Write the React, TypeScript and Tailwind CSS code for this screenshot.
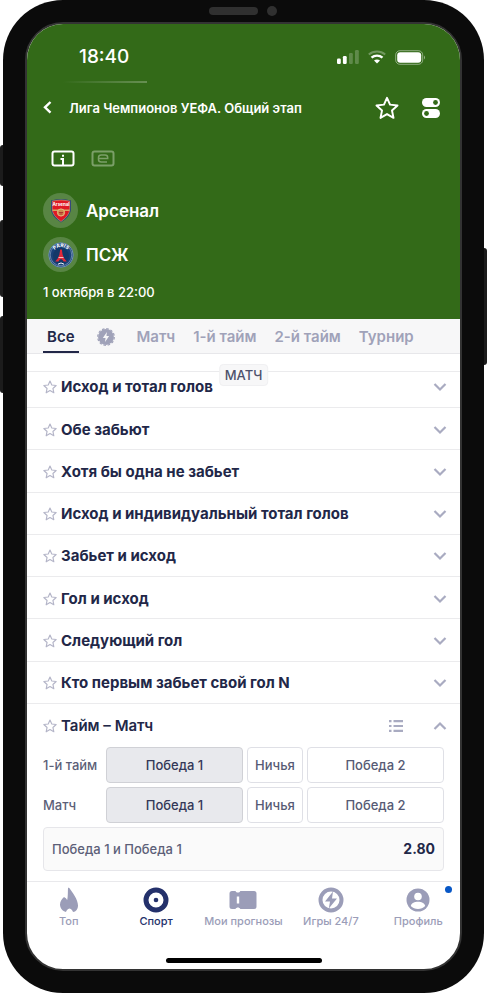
import { ReactNode } from "react";

const markets = [
  "Обе забьют",
  "Хотя бы одна не забьет",
  "Исход и индивидуальный тотал голов",
  "Забьет и исход",
  "Гол и исход",
  "Следующий гол",
  "Кто первым забьет свой гол N",
];

const tabs = ["Матч", "1-й тайм", "2-й тайм", "Турнир"];

const STAR = "M12 2.6l2.8 6.3 6.9.8-5.1 4.6 1.4 6.8-6-3.5-6 3.5 1.4-6.8-5.1-4.6 6.9-.8z";

function StarButton({ title }: { title: string }) {
  return (
    <button type="button" aria-label={`В избранное: ${title}`} className="text-[#b4b5c8]">
      <svg viewBox="1 1 22 22" className="size-[14px]" fill="none" stroke="currentColor" strokeWidth="1.8" strokeLinejoin="round">
        <path d={STAR} />
      </svg>
    </button>
  );
}

function Chevron({ up = false }: { up?: boolean }) {
  return (
    <svg viewBox="0 0 14 10" className="h-[10px] w-[14px] text-[#a9abc1]" fill="none" stroke="currentColor" strokeWidth="2.2">
      <path d={up ? "M1.5 8 7 2.5 12.5 8" : "M1.5 2 7 7.5 12.5 2"} />
    </svg>
  );
}

function MarketRow({ title }: { title: string }) {
  return (
    <div className="flex items-center gap-1 border-b border-[#ebebed] pr-[13px] pl-4">
      <StarButton title={title} />
      <button type="button" className="flex flex-1 items-center justify-between text-left text-[15px] leading-5 font-bold text-[#222748]">
        {title}
        <Chevron />
      </button>
    </div>
  );
}

function OutcomeRow({ label }: { label: string }) {
  return (
    <div role="group" aria-label={label} className="flex h-9 items-center">
      <span className="w-[63px] text-[13px] leading-4 font-medium text-[#5c5f78]">{label}</span>
      <div className="flex h-full flex-1 gap-1 text-[13px] leading-4 font-medium text-[#565a74]">
        <button type="button" aria-pressed="true" className="flex-1 rounded border border-[#d0d1d6] bg-[#e8e9ed] text-[#333858]">Победа 1</button>
        <button type="button" aria-pressed="false" className="w-14 rounded border border-[#dfe0e6] bg-white">Ничья</button>
        <button type="button" aria-pressed="false" className="flex-1 rounded border border-[#dfe0e6] bg-white">Победа 2</button>
      </div>
    </div>
  );
}

function Team({ name, children }: { name: string; children: ReactNode }) {
  return (
    <div className="flex items-center gap-2">
      <span className="flex size-[35px] items-center justify-center rounded-full bg-[#588544]">{children}</span>
      <span className="text-[17px] leading-6 font-semibold text-white">{name}</span>
    </div>
  );
}

function ArsenalCrest() {
  return (
    <svg viewBox="0 0 20 24" className="h-6 w-5">
      <path d="M0 1.5Q10-1 20 1.5V10q0 7-10 13.5Q0 17 0 10z" fill="#263d7d" />
      <path d="M1.300 2Q10 0 18.700 2v8q0 6.500-8.700 12.500Q1.300 16.500 1.300 10z" fill="#df1824" stroke="#d9b27d" strokeWidth=".5" />
      <text x="10" y="7.200" textAnchor="middle" fontSize="4.500" fontWeight="700" fill="#fff" fontFamily="Inter, sans-serif">Arsenal</text>
      <path d="M1.500 11.300h17" stroke="#d7a25f" strokeWidth="1.400" />
      <circle cx="10" cy="13.500" r="3.600" fill="#cf8a4c" stroke="#e3bd80" />
      <path d="M8 13.500h4M8.500 15h3" stroke="#a81e25" strokeWidth=".8" />
    </svg>
  );
}

function ParisCrest() {
  return (
    <svg viewBox="0 0 26 26" className="size-[26px]">
      <circle cx="13" cy="13" r="12.200" fill="#174078" stroke="#6f91b4" />
      <circle cx="13" cy="13" r="10.800" fill="none" stroke="#b7c7da" strokeWidth=".5" />
      <circle cx="13" cy="14" r="8" fill="#123868" />
      <defs><path id="paris-arc" d="M5.200 10A8.600 8.600 0 0 1 20.800 10" /></defs>
      <text fontSize="5" fontWeight="700" fill="#fff" fontFamily="Inter, sans-serif" textAnchor="middle"><textPath href="#paris-arc" startOffset="50%">PARIS</textPath></text>
      <path d="M12.200 7.500h1.600l.8 5q.8 4 4.200 7h-3.300q-.8-2.500-2.500-2.500t-2.500 2.500H7.200q3.400-3 4.200-7z" fill="#e3293a" />
      <path d="M10.500 15.500h5" stroke="#fff" strokeWidth=".7" />
      <path d="M10 22.200q3-2.500 6 0" stroke="#fff" fill="none" />
    </svg>
  );
}

function BoltBadge() {
  return (
    <svg viewBox="0 0 20 20" className="size-[18px]">
      <circle cx="10" cy="10" r="8.800" fill="currentColor" />
      <circle cx="10" cy="10" r="9.200" fill="none" stroke="currentColor" strokeWidth="1.400" strokeDasharray="2.800 2.017" />
      <path d="M11 4.500 6.500 11h3l-.6 4.500L13.500 9h-3z" fill="#f7f7f8" />
    </svg>
  );
}

const nav: { label: string; active?: boolean; dot?: boolean; icon: ReactNode }[] = [
  {
    label: "Топ",
    icon: <path d="M12 .8c.8-.4 1.300 0 1.700.6C16 5 22 12 22 18.500c0 3.500-2 6.500-5 6.500-.3-1.500-1.500-3-3.500-3.500-2 .5-3.200 2-3.500 3.500-3.500-.8-6-3.800-6-7.500 0-3 2-6 4-7.500 1.500.8 2.500 1.800 3.200 3C12 10 11.800 4 12 .8z" fill="currentColor" />,
  },
  {
    label: "Спорт",
    active: true,
    icon: <><circle cx="13" cy="13" r="10" fill="none" stroke="currentColor" strokeWidth="5" /><circle cx="13" cy="13" r="2.300" fill="currentColor" /></>,
  },
  {
    label: "Мои прогнозы",
    icon: <path fillRule="evenodd" d="M2 4h3.500c.8 2 4 2 4.800 0H24a2.500 2.500 0 0 1 2.500 2.500v13A2.500 2.500 0 0 1 24 22H10.300c-.8-2-4-2-4.800 0H2a2.500 2.500 0 0 1-2.500-2.500v-13A2.500 2.500 0 0 1 2 4zm4.800 5.500v7h2.400v-7z" fill="currentColor" />,
  },
  {
    label: "Игры 24/7",
    icon: <><circle cx="13" cy="13" r="10.500" fill="none" stroke="currentColor" strokeWidth="4" /><path d="M15 4.500 7 14.500h5L10.800 21.500 19 11.500h-5z" fill="currentColor" /></>,
  },
  {
    label: "Профиль",
    dot: true,
    icon: <><circle cx="13" cy="13" r="11.500" fill="currentColor" /><circle cx="13" cy="9.500" r="3.800" fill="#fff" /><path d="M5.800 19c.8-3.200 3.800-4.200 7.200-4.200s6.400 1 7.200 4.200c-1.800 2-4.500 3-7.200 3s-5.400-1-7.200-3z" fill="#fff" /></>,
  },
];

export default function App() {
  return (
    <div className="relative min-h-screen bg-white px-[3px] font-['Inter','Noto_Sans',sans-serif]">
      <div className="absolute top-[145px] left-0 h-[41px] w-[3px] rounded-l-sm bg-[#1c1c1c]" />
      <div className="absolute top-[220px] left-0 h-[77px] w-[3px] rounded-l-sm bg-[#1c1c1c]" />
      <div className="absolute top-[316px] left-0 h-[77px] w-[3px] rounded-l-sm bg-[#1c1c1c]" />
      <div className="absolute top-[248px] right-0 h-[117px] w-[3px] rounded-r-sm bg-[#1c1c1c]" />

      <div className="relative rounded-[60px] bg-[#0b0b0b] p-[22px]">
        <div className="absolute top-[7px] left-[206px] h-2 w-[49px] rounded-full bg-[#303030]" />
        <div className="absolute top-[6px] left-[264px] size-[10px] rounded-full bg-[#303030]" />

        <div className="overflow-hidden rounded-[38px] border-2 border-[#333] bg-white">
          <header className="bg-[#336a18] text-white">
            <div className="flex h-[57px] items-center justify-between pt-[9px] pr-[34px] pl-[52px]">
              <time className="text-[19px] leading-6 font-medium">18:40</time>
              <div className="flex items-center gap-[9px]">
                <svg viewBox="0 0 22 14" className="h-[14px] w-[22px]" fill="#fff">
                  <rect x="0" y="8.500" width="3.800" height="5.500" rx="1.200" />
                  <rect x="5.900" y="6" width="3.800" height="8" rx="1.200" />
                  <rect x="12" y="3" width="3.800" height="11" rx="1.200" opacity=".22" />
                  <rect x="18" y="0" width="3.800" height="14" rx="1.200" opacity=".22" />
                </svg>
                <svg viewBox="0 0 18 14" className="h-[14px] w-[18px]" fill="none" stroke="#fff" strokeWidth="2">
                  <path d="M.8 4.500C5.500.4 12.500.4 17.200 4.500" opacity=".3" />
                  <path d="M3.500 7.700c3.200-2.800 7.800-2.800 11 0" strokeWidth="2.400" />
                  <path d="m9 13.600-3-3c1.700-1.500 4.300-1.500 6 0z" fill="#fff" stroke="none" />
                </svg>
                <svg viewBox="0 0 31 15" className="h-[15px] w-[31px]">
                  <rect x=".7" y=".7" width="27" height="13.600" rx="4.200" fill="none" stroke="#fff" opacity=".45" />
                  <rect x="2.200" y="2.200" width="24" height="10.600" rx="3" fill="#fff" />
                  <path d="M29 5.500q2 2 0 4z" fill="#fff" opacity=".5" />
                </svg>
              </div>
            </div>
            <div className="ml-9 h-[2px] w-[84px] bg-linear-to-r from-[#336a18] to-[#678f52]" />
            <div className="flex h-[49px] items-center pr-5 pl-[15px]">
              <button type="button" aria-label="Назад" className="w-[27px]">
                <svg viewBox="0 0 12 14" className="h-[14px] w-3" fill="none" stroke="currentColor" strokeWidth="2.400"><path d="M8.500 1 3 6.300l5.500 5.300" /></svg>
              </button>
              <h1 className="flex-1 text-[13px] leading-4 font-semibold whitespace-nowrap">Лига Чемпионов УЕФА. Общий этап</h1>
              <button type="button" aria-label="В избранное" className="mr-[22px]">
                <svg viewBox="0 0 24 24" className="size-[26px]" fill="none" stroke="currentColor" strokeWidth="1.800" strokeLinejoin="round"><path d={STAR} /></svg>
              </button>
              <button type="button" aria-label="Настройки">
                <svg viewBox="0 0 18 22" className="h-[22px] w-[18px]" fill="#fff">
                  <rect x="0" y="1" width="18" height="9" rx="4.500" /><rect x="0" y="12" width="18" height="9" rx="4.500" />
                  <circle cx="13.500" cy="5.500" r="2.400" fill="#336a18" /><circle cx="4.500" cy="16.500" r="2.400" fill="#336a18" />
                </svg>
              </button>
            </div>
            <div className="mt-[18px] flex gap-4 px-6">
              <button type="button" aria-label="Информация">
                <svg viewBox="0 0 24 17" className="h-[17px] w-6" fill="none" stroke="currentColor" strokeWidth="2"><rect x="1.500" y="1.500" width="21" height="14" rx="2" /><path d="M9.500 9H12V15M11 5.700h2" /></svg>
              </button>
              <button type="button" aria-label="Киберспорт" className="text-[#7b9f68]">
                <svg viewBox="0 0 24 17" className="h-[17px] w-6" fill="none" stroke="currentColor" strokeWidth="2"><rect x="1.500" y="1.500" width="21" height="14" rx="2" /><path d="M7.500 8.500h9.200V7.500Q16.700 5 14 5H10.200Q7.500 5 7.500 7.500v2Q7.500 12 10.200 12H16" strokeWidth="1.500" /></svg>
              </button>
            </div>
            <div className="mt-[26px] flex flex-col gap-[9px] px-4">
              <Team name="Арсенал"><ArsenalCrest /></Team>
              <Team name="ПСЖ"><ParisCrest /></Team>
            </div>
            <p className="px-4 pt-3 pb-[19px] text-[13px] leading-4 font-medium">1 октября в 22:00</p>
          </header>

          <div role="tablist" className="flex h-[35px] gap-[18px] border-b border-[#e7e7ea] bg-[#f7f7f8] px-4 text-[15px] leading-5 font-semibold whitespace-nowrap text-[#a0a2b9]">
            <button type="button" role="tab" aria-selected="true" className="border-b-2 border-[#222748] px-1 pt-1 text-[#222748]">Все</button>
            <button type="button" role="tab" aria-selected="false" aria-label="Быстрые ставки" className="mr-1 pt-[2px]"><BoltBadge /></button>
            {tabs.map((t) => (
              <button key={t} type="button" role="tab" aria-selected="false" className="pt-[2px]">{t}</button>
            ))}
          </div>

          <main>
            <section className="relative mt-[17px] border-t border-[#ebebed]">
              <h2 className="absolute -top-2 left-1/2 -translate-x-1/2 rounded-sm border border-[#f0f0f2] bg-[#f7f7f8] px-[5px] py-[2px] text-[13px] leading-4 font-medium text-[#4d516c]">МАТЧ</h2>
              <div className="grid h-9 *:pb-[5px]"><MarketRow title="Исход и тотал голов" /></div>
              <div className="grid h-[296px] auto-rows-fr *:pt-[2px]">
                {markets.map((m) => <MarketRow key={m} title={m} />)}
              </div>
            </section>
            <section className="px-4 pb-[10px]">
              <div className="-mr-[3px] flex h-[43px] items-center gap-1">
                <StarButton title="Тайм – Матч" />
                <h3 className="flex-1 text-[15px] leading-5 font-semibold text-[#222748]">Тайм – Матч</h3>
                <button type="button" aria-label="Показать списком" className="mr-[26px] text-[#a9abc1]">
                  <svg viewBox="0 0 14 12" className="h-3 w-[14px]" stroke="currentColor" strokeWidth="2.200"><path d="M0 1.200h2.500M4.500 1.200H14M0 6h2.500M4.500 6H14M0 10.800h2.500M4.500 10.800H14" /></svg>
                </button>
                <button type="button" aria-label="Свернуть"><Chevron up /></button>
              </div>
              <div className="flex flex-col gap-1">
                <OutcomeRow label="1-й тайм" />
                <OutcomeRow label="Матч" />
                <button type="button" className="flex h-11 items-center justify-between rounded border border-[#e6e6ea] bg-[#fafafa] px-2 text-[13px] leading-4 font-medium text-[#5c5f78]">
                  Победа 1 и Победа 1
                  <span className="text-sm font-bold text-[#222748]">2.80</span>
                </button>
              </div>
            </section>
          </main>

          <nav className="border-t border-[#e9e9ec] pt-[5px]">
            <div className="-mx-[2px] grid grid-cols-5">
              {nav.map((n) => (
                <a key={n.label} href="#" className={`relative flex flex-col items-center text-[11px] leading-4 font-medium whitespace-nowrap ${n.active ? "text-[#24316b]" : "text-[#9b9db8]"}`}>
                  <svg viewBox="0 0 26 26" className="size-[26px] overflow-visible">{n.icon}</svg>
                  {n.label}
                  {n.dot && <span className="absolute -top-px right-[10px] size-[7px] rounded-full bg-[#0857c6]" />}
                </a>
              ))}
            </div>
          </nav>
          <div className="mx-auto mt-[29px] mb-[6px] h-[5px] w-[156px] rounded-full bg-black" />
        </div>
      </div>
    </div>
  );
}
